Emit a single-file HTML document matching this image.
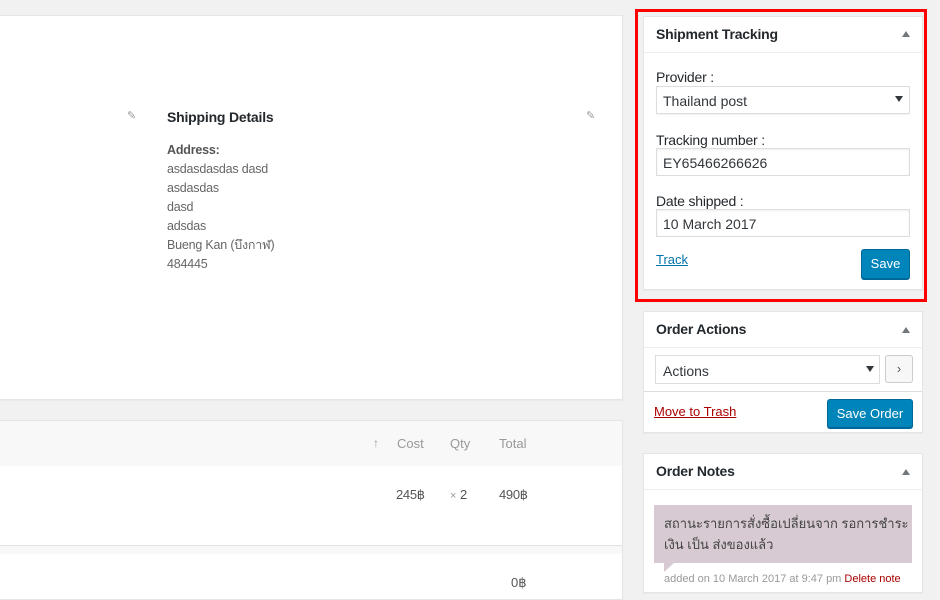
<!DOCTYPE html>
<html><head><meta charset="utf-8"><style>
*{box-sizing:border-box;margin:0;padding:0}
body{width:940px;height:585px;overflow:hidden;background:#f1f1f1;font-family:"Liberation Sans",sans-serif;font-size:13px;color:#444;position:relative}
.abs{position:absolute}
.panel{position:absolute;background:#fff;border:1px solid #e5e5e5;box-shadow:0 1px 1px rgba(0,0,0,.04)}
.hd{position:absolute;left:0;right:0;top:0;border-bottom:1px solid #eee;font-weight:bold;font-size:14px;color:#23282d;padding-left:12px;letter-spacing:-.2px}
.tri{position:absolute;right:12px;width:0;height:0;border-left:4px solid transparent;border-right:4px solid transparent;border-bottom:6px solid #72777c}
.lbl{position:absolute;left:12px;font-size:14px;color:#23282d;letter-spacing:-.2px}
.inp{position:absolute;left:12px;width:254px;height:28px;border:1px solid #ddd;box-shadow:inset 0 1px 2px rgba(0,0,0,.07);font-size:14px;color:#32373c;padding:6px 0 0 6px}
.btn{position:absolute;background:#0085ba;border:1px solid #006799;border-radius:3px;color:#fff;font-size:13px;text-align:center;box-shadow:0 1px 0 #006799}
.dd{position:absolute;right:6px;top:9px;width:0;height:0;border-left:4px solid transparent;border-right:4px solid transparent;border-top:6px solid #32373c}
.addr{font-size:12.5px;color:#666;line-height:19px;letter-spacing:-.2px}
</style></head><body>

<div class="panel" style="left:-2px;top:15px;width:625px;height:385px">
  <div class="abs" style="left:128px;top:93px;color:#999;font-size:11px">✎</div>
  <div class="abs" style="left:587px;top:93px;color:#999;font-size:11px">✎</div>
  <div class="abs" style="left:168px;top:93px;font-weight:bold;font-size:14px;color:#23282d;letter-spacing:-.2px">Shipping Details</div>
  <div class="abs addr" style="left:168px;top:125px"><b style="font-weight:bold;color:#555">Address:</b><br>asdasdasdas dasd<br>asdasdas<br>dasd<br>adsdas<br>Bueng Kan (บึงกาฬ)<br>484445</div>
</div>

<div class="panel" style="left:-2px;top:420px;width:625px;height:180px">
  <div class="abs" style="left:0;right:0;top:0;height:45px;background:#f8f8f8"></div>
  <div class="abs" style="left:374px;top:15px;color:#999;font-size:12px">↑</div>
  <div class="abs" style="left:398px;top:15px;color:#999">Cost</div>
  <div class="abs" style="left:451px;top:15px;color:#999">Qty</div>
  <div class="abs" style="left:500px;top:15px;color:#999">Total</div>
  <div class="abs" style="left:397px;top:66px;color:#555;letter-spacing:-.3px">245฿</div>
  <div class="abs" style="left:451px;top:66px;color:#555"><span style="color:#999;font-size:11px">×</span> 2</div>
  <div class="abs" style="left:500px;top:66px;color:#555;letter-spacing:-.3px">490฿</div>
  <div class="abs" style="left:0;right:0;top:124px;height:1px;background:#e1e1e1"></div>
  <div class="abs" style="left:0;right:0;top:125px;height:8px;background:#f8f8f8"></div>
  <div class="abs" style="left:512px;top:154px;color:#555">0฿</div>
</div>

<div class="abs" style="left:635px;top:9px;width:292px;height:293px;border:3px solid #f00"></div>
<div class="panel" style="left:643px;top:16px;width:280px;height:274px">
  <div class="hd" style="height:36px;line-height:35px">Shipment Tracking</div>
  <div class="tri" style="top:14px"></div>
  <div class="lbl" style="top:52px">Provider :</div>
  <div class="inp" style="top:69px;box-shadow:0 1px 1px rgba(0,0,0,.05)">Thailand post<span class="dd"></span></div>
  <div class="lbl" style="top:115px">Tracking number :</div>
  <div class="inp" style="top:131px">EY65466266626</div>
  <div class="lbl" style="top:176px">Date shipped :</div>
  <div class="inp" style="top:192px">10 March 2017</div>
  <div class="abs" style="left:12px;top:235px;color:#0073aa;text-decoration:underline">Track</div>
  <div class="btn" style="left:217px;top:232px;width:49px;height:30px;line-height:28px">Save</div>
</div>

<div class="panel" style="left:643px;top:311px;width:280px;height:122px">
  <div class="hd" style="height:36px;line-height:35px">Order Actions</div>
  <div class="tri" style="top:15px"></div>
  <div class="abs" style="left:11px;top:43px;width:225px;height:29px;border:1px solid #ddd;font-size:14px;color:#32373c;padding:7px 0 0 7px">Actions<span class="dd" style="top:10px;right:5px"></span></div>
  <div class="abs" style="left:241px;top:43px;width:28px;height:28px;border:1px solid #ccc;border-radius:3px;background:#f7f7f7;text-align:center;line-height:25px;color:#555;font-size:13px">›</div>
  <div class="abs" style="left:0;right:0;top:79px;height:1px;background:#ddd"></div>
  <div class="abs" style="left:10px;top:92px;color:#a00;text-decoration:underline">Move to Trash</div>
  <div class="btn" style="left:183px;top:87px;width:86px;height:29px;line-height:27px">Save Order</div>
</div>

<div class="panel" style="left:643px;top:453px;width:280px;height:140px">
  <div class="hd" style="height:36px;line-height:35px">Order Notes</div>
  <div class="tri" style="top:15px"></div>
  <div class="abs" style="left:10px;top:51px;width:258px;height:58px;background:#d7cad2;padding:8px 10px;font-size:13px;line-height:21px;color:#444;white-space:nowrap">สถานะรายการสั่งซื้อเปลี่ยนจาก รอการชำระ<br>เงิน เป็น ส่งของแล้ว</div>
  <div class="abs" style="left:20px;top:109px;width:0;height:0;border-top:9px solid #d7cad2;border-right:10px solid transparent"></div>
  <div class="abs" style="left:20px;top:119px;font-size:11px;color:#999;white-space:nowrap">added on 10 March 2017 at 9:47 pm <span style="color:#a00">Delete note</span></div>
</div>

</body></html>
